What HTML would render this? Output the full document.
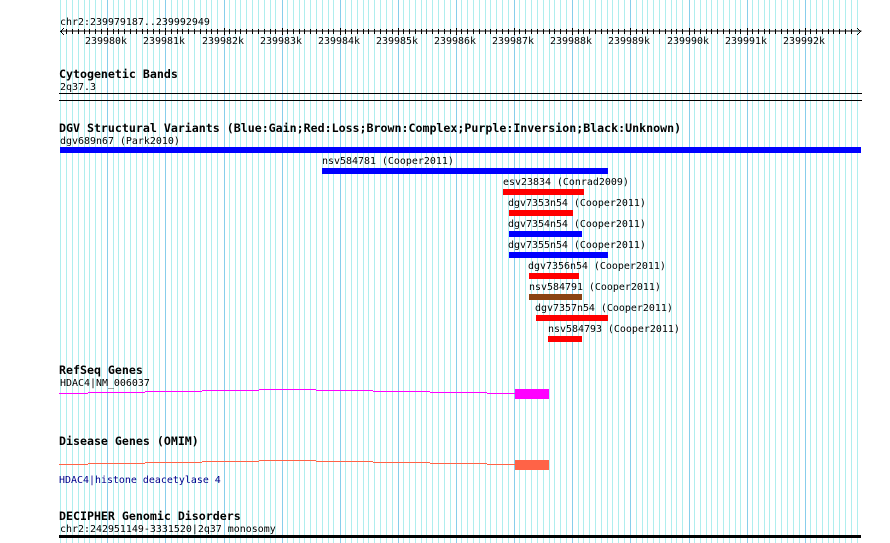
<!DOCTYPE html>
<html>
<head>
<meta charset="utf-8">
<style>
html,body{margin:0;padding:0;background:#fff;width:890px;height:543px;overflow:hidden}
svg{display:block}
text{font-family:"DejaVu Sans Mono","Liberation Mono",monospace;font-size:9.96px;fill:#000}
.b{font-weight:bold;font-size:11.62px}
</style>
</head>
<body>
<svg width="890" height="543" viewBox="0 0 890 543" xmlns="http://www.w3.org/2000/svg">
<g shape-rendering="crispEdges">
<path fill="none" stroke="#afeeee" stroke-width="1" transform="translate(.5 0)" d="M60 0V543M66 0V543M72 0V543M78 0V543M84 0V543M89 0V543M95 0V543M101 0V543M113 0V543M118 0V543M124 0V543M130 0V543M136 0V543M142 0V543M147 0V543M153 0V543M159 0V543M171 0V543M177 0V543M182 0V543M188 0V543M194 0V543M200 0V543M206 0V543M211 0V543M217 0V543M229 0V543M235 0V543M240 0V543M246 0V543M252 0V543M258 0V543M264 0V543M270 0V543M275 0V543M287 0V543M293 0V543M299 0V543M304 0V543M310 0V543M316 0V543M322 0V543M328 0V543M333 0V543M345 0V543M351 0V543M357 0V543M363 0V543M368 0V543M374 0V543M380 0V543M386 0V543M392 0V543M403 0V543M409 0V543M415 0V543M421 0V543M426 0V543M432 0V543M438 0V543M444 0V543M450 0V543M461 0V543M467 0V543M473 0V543M479 0V543M485 0V543M490 0V543M496 0V543M502 0V543M508 0V543M519 0V543M525 0V543M531 0V543M537 0V543M543 0V543M549 0V543M554 0V543M560 0V543M566 0V543M578 0V543M583 0V543M589 0V543M595 0V543M601 0V543M607 0V543M612 0V543M618 0V543M624 0V543M636 0V543M642 0V543M647 0V543M653 0V543M659 0V543M665 0V543M671 0V543M676 0V543M682 0V543M694 0V543M700 0V543M706 0V543M711 0V543M717 0V543M723 0V543M729 0V543M735 0V543M740 0V543M752 0V543M758 0V543M764 0V543M769 0V543M775 0V543M781 0V543M787 0V543M793 0V543M799 0V543M810 0V543M816 0V543M822 0V543M828 0V543M833 0V543M839 0V543M845 0V543M851 0V543M857 0V543"/>
<path fill="none" stroke="#87ceeb" stroke-width="1" transform="translate(.5 0)" d="M107 0V543M165 0V543M224 0V543M282 0V543M340 0V543M398 0V543M456 0V543M514 0V543M572 0V543M630 0V543M689 0V543M747 0V543M805 0V543"/>
<path fill="none" stroke="#000" stroke-width="1" transform="translate(.5 0)" d="M60 31H861M66 29V34M72 29V34M78 29V34M84 29V34M89 29V34M95 29V34M101 29V34M107 28V35M113 29V34M118 29V34M124 29V34M130 29V34M136 29V34M142 29V34M147 29V34M153 29V34M159 29V34M165 28V35M171 29V34M177 29V34M182 29V34M188 29V34M194 29V34M200 29V34M206 29V34M211 29V34M217 29V34M224 28V35M229 29V34M235 29V34M240 29V34M246 29V34M252 29V34M258 29V34M264 29V34M270 29V34M275 29V34M282 28V35M287 29V34M293 29V34M299 29V34M304 29V34M310 29V34M316 29V34M322 29V34M328 29V34M333 29V34M340 28V35M345 29V34M351 29V34M357 29V34M363 29V34M368 29V34M374 29V34M380 29V34M386 29V34M392 29V34M398 28V35M403 29V34M409 29V34M415 29V34M421 29V34M426 29V34M432 29V34M438 29V34M444 29V34M450 29V34M456 28V35M461 29V34M467 29V34M473 29V34M479 29V34M485 29V34M490 29V34M496 29V34M502 29V34M508 29V34M514 28V35M519 29V34M525 29V34M531 29V34M537 29V34M543 29V34M549 29V34M554 29V34M560 29V34M566 29V34M572 28V35M578 29V34M583 29V34M589 29V34M595 29V34M601 29V34M607 29V34M612 29V34M618 29V34M624 29V34M630 28V35M636 29V34M642 29V34M647 29V34M653 29V34M659 29V34M665 29V34M671 29V34M676 29V34M682 29V34M689 28V35M694 29V34M700 29V34M706 29V34M711 29V34M717 29V34M723 29V34M729 29V34M735 29V34M740 29V34M747 28V35M752 29V34M758 29V34M764 29V34M769 29V34M775 29V34M781 29V34M787 29V34M793 29V34M799 29V34M805 28V35M810 29V34M816 29V34M822 29V34M828 29V34M833 29V34M839 29V34M845 29V34M851 29V34"/>
<rect x="60" y="31" width="1" height="1"/><rect x="61" y="30" width="1" height="3"/><rect x="62" y="29" width="1" height="1"/><rect x="62" y="33" width="1" height="1"/><rect x="63" y="28" width="1" height="1"/><rect x="63" y="34" width="1" height="1"/>
<rect x="860" y="31" width="1" height="1"/><rect x="859" y="30" width="1" height="1"/><rect x="859" y="32" width="1" height="1"/><rect x="858" y="29" width="1" height="1"/><rect x="858" y="33" width="1" height="1"/><rect x="857" y="28" width="1" height="1"/><rect x="857" y="34" width="1" height="1"/>
<rect x="59" y="93" width="803" height="1"/>
<rect x="59" y="100" width="803" height="1"/>
<rect x="60" y="147" width="801" height="6" fill="#0000ff"/>
<rect x="322" y="168" width="286" height="6" fill="#0000ff"/>
<rect x="503" y="189" width="81" height="6" fill="#ff0000"/>
<rect x="509" y="210" width="64" height="6" fill="#ff0000"/>
<rect x="509" y="231" width="73" height="6" fill="#0000ff"/>
<rect x="509" y="252" width="99" height="6" fill="#0000ff"/>
<rect x="529" y="273" width="50" height="6" fill="#ff0000"/>
<rect x="529" y="294" width="53" height="6" fill="#8b4513"/>
<rect x="536" y="315" width="72" height="6" fill="#ff0000"/>
<rect x="548" y="336" width="34" height="6" fill="#ff0000"/>
<path fill="none" stroke="#ff00ff" transform="translate(0 .5)" d="M59 393H88M88 392H145M145 391H202M202 390H259M259 389H316M316 390H373M373 391H430M430 392H487M487 393H515"/>
<rect x="515" y="389" width="34" height="10" fill="#ff00ff"/>
<path fill="none" stroke="#ff6347" transform="translate(0 .5)" d="M59 464H88M88 463H145M145 462H202M202 461H259M259 460H316M316 461H373M373 462H430M430 463H487M487 464H515"/>
<rect x="515" y="460" width="34" height="10" fill="#ff6347"/>
<rect x="59" y="535" width="802" height="3"/>
</g>
<text x="60" y="25">chr2:239979187..239992949</text>
<text x="85" y="44">239980k</text>
<text x="143" y="44">239981k</text>
<text x="202" y="44">239982k</text>
<text x="260" y="44">239983k</text>
<text x="318" y="44">239984k</text>
<text x="376" y="44">239985k</text>
<text x="434" y="44">239986k</text>
<text x="492" y="44">239987k</text>
<text x="550" y="44">239988k</text>
<text x="608" y="44">239989k</text>
<text x="667" y="44">239990k</text>
<text x="725" y="44">239991k</text>
<text x="783" y="44">239992k</text>
<text class="b" x="59" y="78">Cytogenetic Bands</text>
<text x="60" y="90">2q37.3</text>
<text class="b" x="59" y="132">DGV Structural Variants (Blue:Gain;Red:Loss;Brown:Complex;Purple:Inversion;Black:Unknown)</text>
<text x="60" y="144">dgv689n67 (Park2010)</text>
<text x="322" y="164">nsv584781 (Cooper2011)</text>
<text x="503" y="185">esv23834 (Conrad2009)</text>
<text x="508" y="206">dgv7353n54 (Cooper2011)</text>
<text x="508" y="227">dgv7354n54 (Cooper2011)</text>
<text x="508" y="248">dgv7355n54 (Cooper2011)</text>
<text x="528" y="269">dgv7356n54 (Cooper2011)</text>
<text x="529" y="290">nsv584791 (Cooper2011)</text>
<text x="535" y="311">dgv7357n54 (Cooper2011)</text>
<text x="548" y="332">nsv584793 (Cooper2011)</text>
<text class="b" x="59" y="374">RefSeq Genes</text>
<text x="60" y="386">HDAC4|NM_006037</text>
<text class="b" x="59" y="445">Disease Genes (OMIM)</text>
<text x="59" y="483" style="fill:#00008b">HDAC4|histone deacetylase 4</text>
<text class="b" x="59" y="520">DECIPHER Genomic Disorders</text>
<text x="60" y="532">chr2:242951149-3331520|2q37 monosomy</text>
</svg>
</body>
</html>
